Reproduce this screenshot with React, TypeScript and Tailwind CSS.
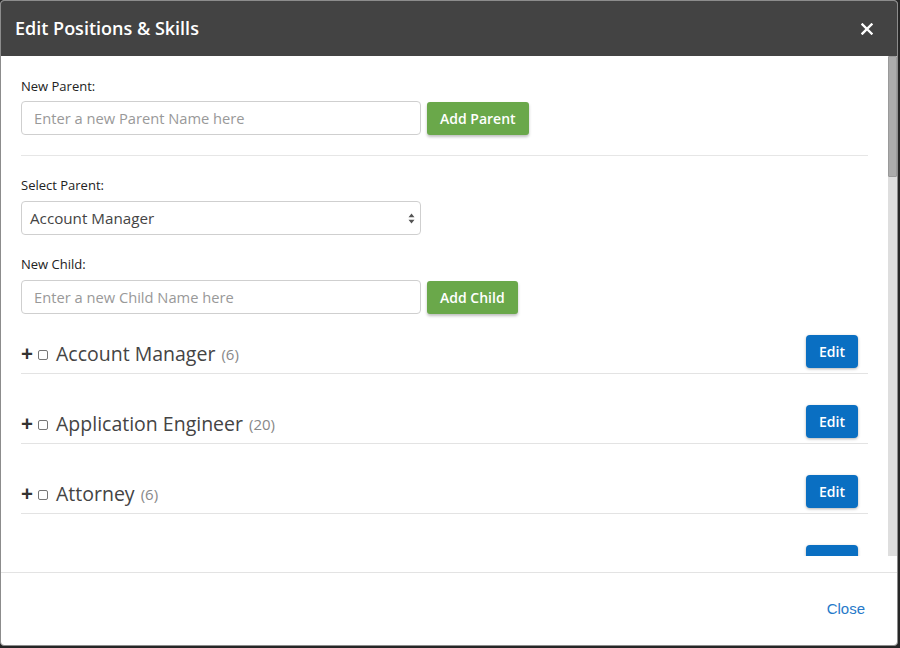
import React from "react";

const font = { fontFamily: "'Open Sans', 'Noto Sans', sans-serif" };

const rows = [
  { name: "Account Manager", count: 6 },
  { name: "Application Engineer", count: 20 },
  { name: "Attorney", count: 6 },
  { name: "Biomedical Engineer", count: 4 },
];

function GreenButton({ children }: { children: React.ReactNode }) {
  return (
    <button className="h-[33px] rounded-[3px] bg-[#6aa84a] px-[13px] text-[14px] font-semibold text-white shadow-[0_2px_3px_rgba(0,0,0,0.25)]">
      {children}
    </button>
  );
}

function Row({ name, count }: { name: string; count: number }) {
  return (
    <div className="flex h-[70px] items-end justify-between border-b border-[#e3e3e3] pb-[5px] first:h-[60px]">
      <div className="flex h-[33px] items-center pt-[4px]">
        <span className="text-[21px] font-bold leading-none text-[#333]">+</span>
        <span className="mt-[3px] ml-[5px] h-[10px] w-[10px] rounded-[2px] border border-[#767676] bg-white" />
        <span className="ml-[8px] text-[19.5px] leading-[26px] text-[#444]">{name}</span>
        <span className="ml-[6px] text-[15px] leading-[26px] text-[#888]">({count})</span>
      </div>
      <button className="mr-[10px] h-[33px] w-[52px] rounded-[4px] bg-[#0a6fc2] text-[14px] font-semibold text-white shadow-[0_1px_3px_rgba(0,0,0,0.3)]">
        Edit
      </button>
    </div>
  );
}

export default function App() {
  return (
    <div className="h-[648px] w-[900px] bg-[#262626]" style={font}>
      <div className="flex h-[646px] w-[898px] flex-col overflow-hidden rounded-[4px] border border-[#8c8c8c] bg-white">
        <div className="flex h-[55px] shrink-0 items-center justify-between bg-[#434343] pl-[14px] pr-[24px]">
          <h2 className="text-[18px] font-semibold text-white">Edit Positions &amp; Skills</h2>
          <svg width="12" height="12" viewBox="0 0 12 12">
            <path d="M1.5 1.5 L10.5 10.5 M10.5 1.5 L1.5 10.5" stroke="#fff" strokeWidth="2.4" strokeLinecap="square" />
          </svg>
        </div>

        <div className="flex h-[500px] shrink-0">
          <div className="flex-1 overflow-hidden pt-[20px] pl-[20px] pr-[20px]">
            <label className="block h-[20px] text-[13px] leading-[20px] text-[#222]">New Parent:</label>
            <div className="mt-[5px] flex items-center gap-[6px]">
              <div className="flex h-[34px] w-[400px] items-center rounded-[4px] border border-[#cfcfcf] px-[12px] text-[14.7px] text-[#999]">
                Enter a new Parent Name here
              </div>
              <GreenButton>Add Parent</GreenButton>
            </div>
            <div className="mt-[20px] border-t border-[#e6e6e6]" />

            <label className="mt-[19px] block h-[20px] text-[13px] leading-[20px] text-[#222]">Select Parent:</label>
            <div className="mt-[6px] flex h-[34px] w-[400px] items-center justify-between rounded-[4px] border border-[#cfcfcf] pl-[8px] pr-[5px] text-[15.2px] text-[#444]">
              <span>Account Manager</span>
              <svg width="7" height="11" viewBox="0 0 7 11">
                <path d="M3.5 0.5 L6.5 4.2 L0.5 4.2 Z M3.5 10.5 L6.5 6.8 L0.5 6.8 Z" fill="#555" />
              </svg>
            </div>

            <label className="mt-[19px] block h-[20px] text-[13px] leading-[20px] text-[#222]">New Child:</label>
            <div className="mt-[6px] flex items-center gap-[6px]">
              <div className="flex h-[34px] w-[400px] items-center rounded-[4px] border border-[#cfcfcf] px-[12px] text-[14.7px] text-[#999]">
                Enter a new Child Name here
              </div>
              <GreenButton>Add Child</GreenButton>
            </div>

            <div>
              {rows.map((r) => (
                <Row key={r.name} {...r} />
              ))}
            </div>
          </div>
          <div className="w-[9px] shrink-0 bg-[#dedede]">
            <div className="h-[121px] rounded-[1px] border border-[#9a9a9a] bg-[#ababab]" />
          </div>
        </div>

        <div className="h-[16px] shrink-0" />
        <div className="flex flex-1 items-center justify-end border-t border-[#e3e3e3] pr-[32px]">
          <a className="text-[15px] text-[#2679c9]" style={{ fontFamily: "'Liberation Sans', Arial, sans-serif" }}>
            Close
          </a>
        </div>
      </div>
    </div>
  );
}
